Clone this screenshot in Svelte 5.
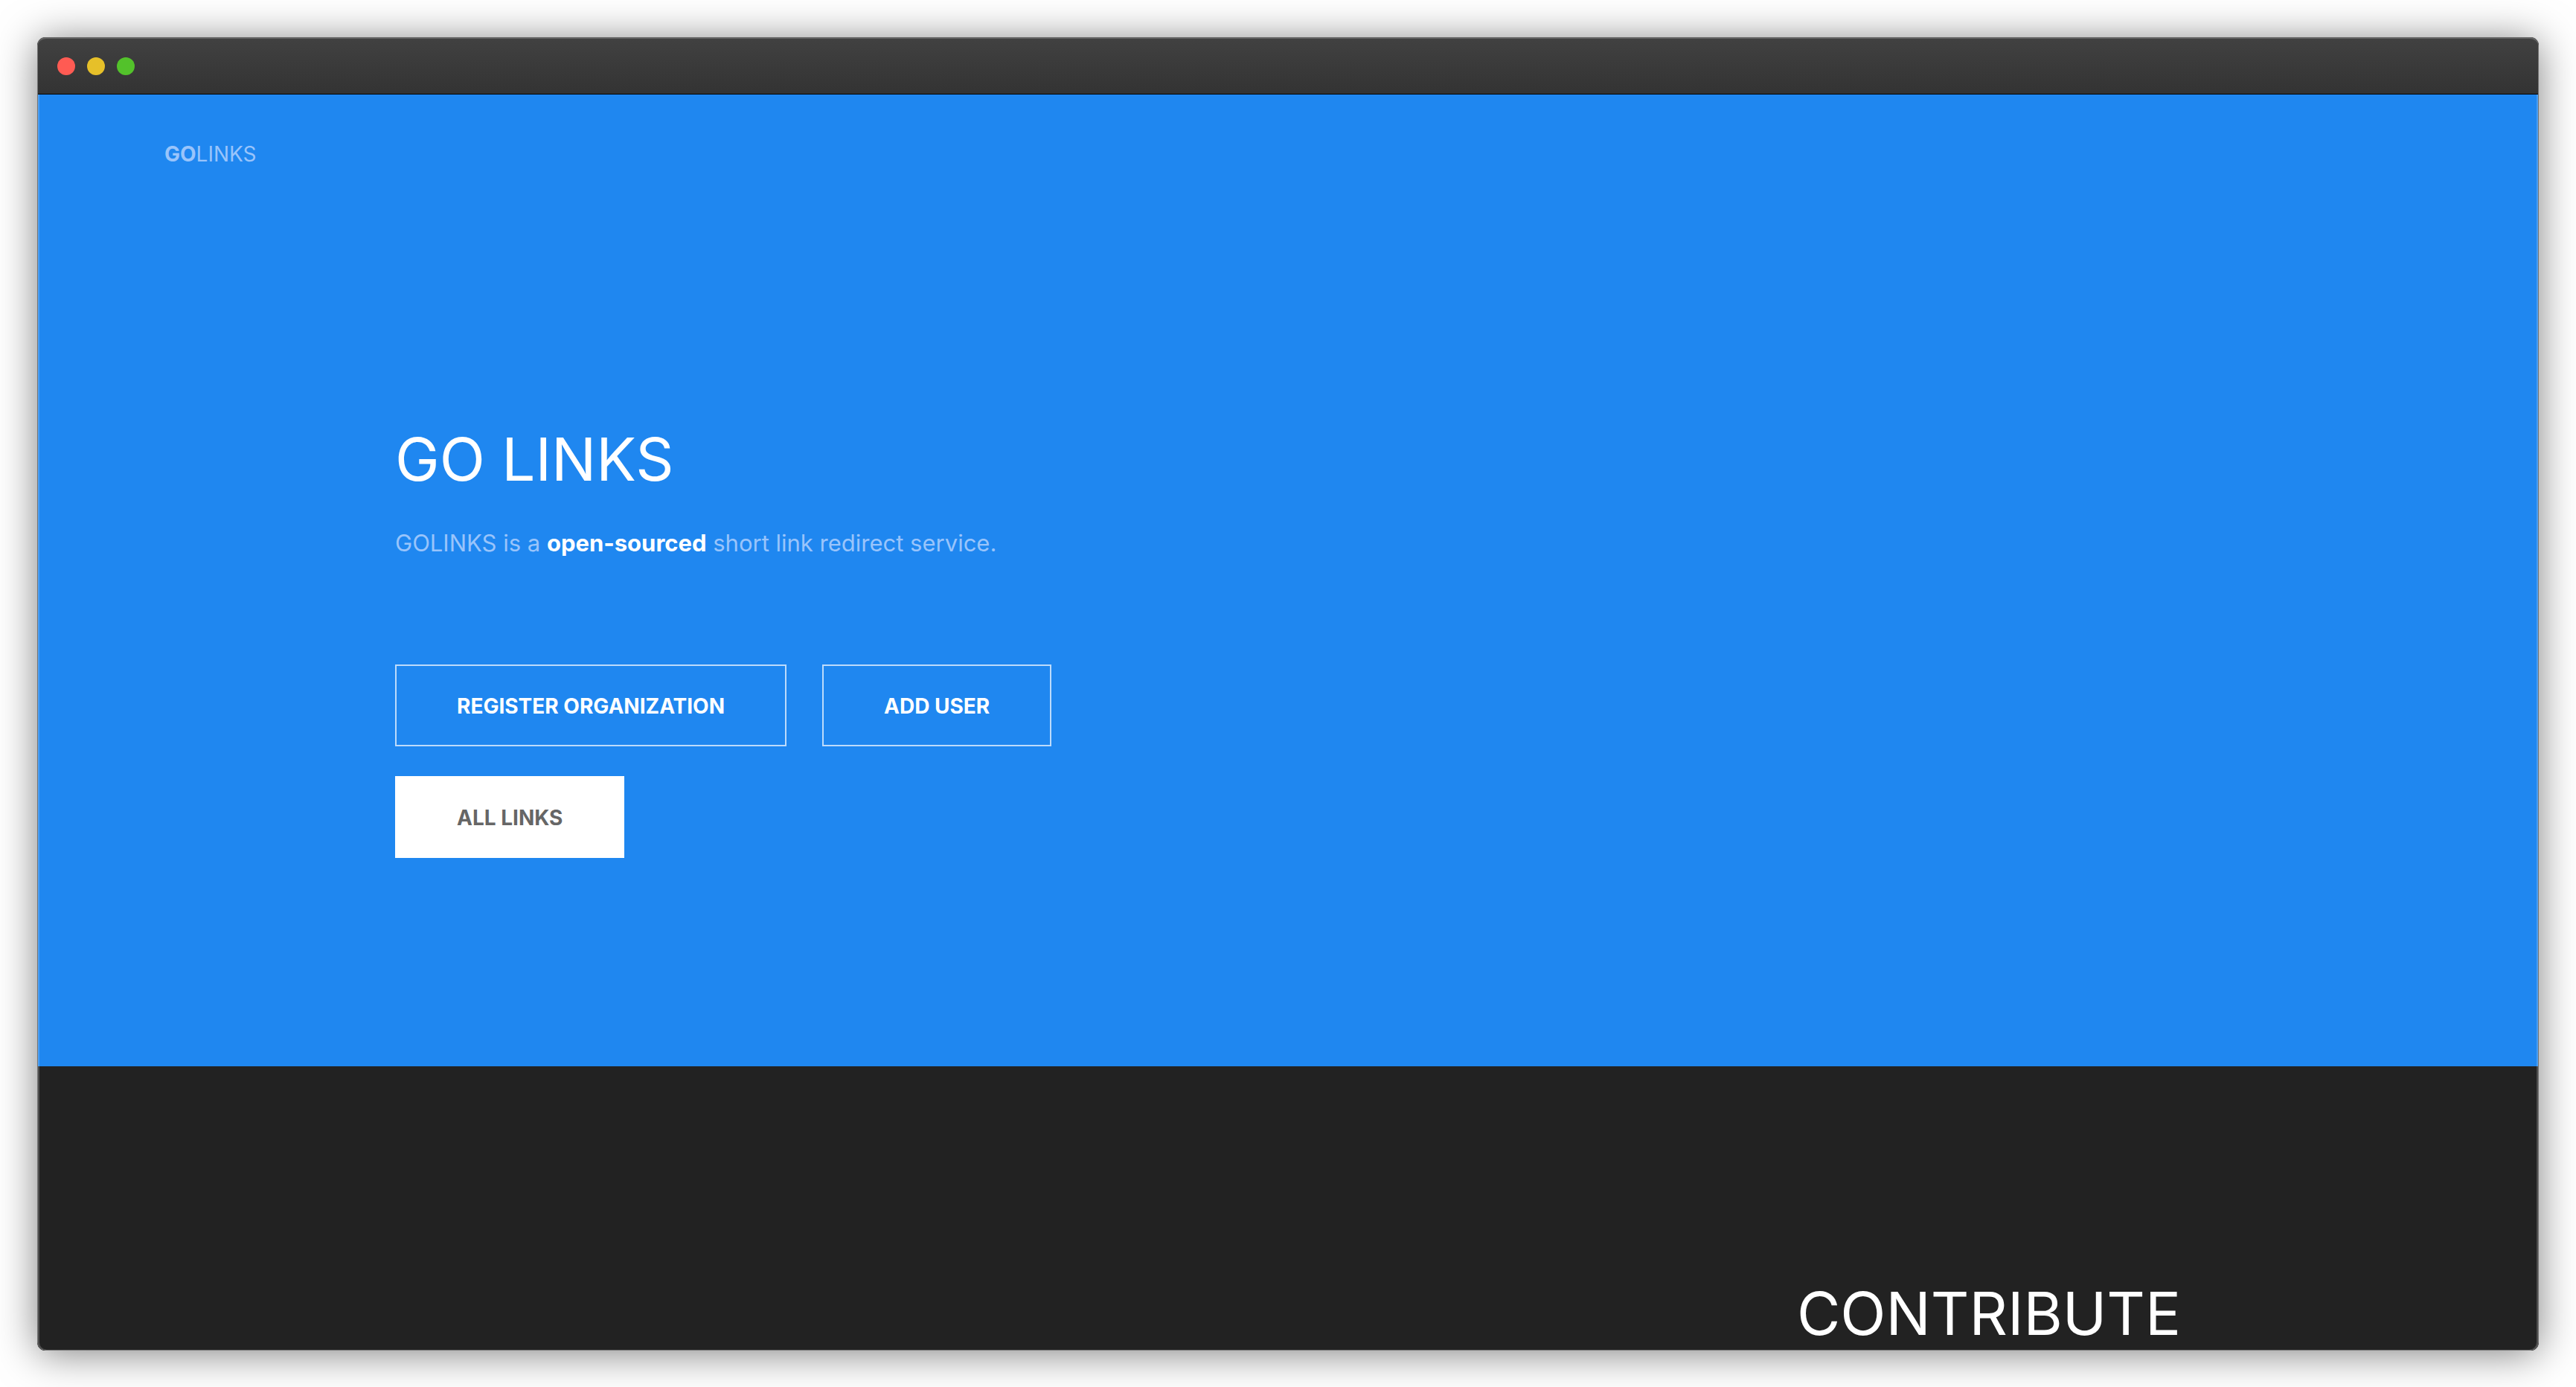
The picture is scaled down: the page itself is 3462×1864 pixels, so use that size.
<script>
  const actions = [
    { label: 'REGISTER ORGANIZATION', href: '#register', solid: false },
    { label: 'ADD USER', href: '#add-user', solid: false },
    { label: 'ALL LINKS', href: '#links', solid: true }
  ];
  const lights = ['close', 'minimize', 'zoom'];
</script>

<div class="stage">
  <div class="window">
    <div class="titlebar">
      {#each lights as light}
        <button class="light {light}" type="button" aria-label={light}></button>
      {/each}
    </div>

    <div class="page">
      <section class="hero">
        <nav>
          <a class="brand" href="#home"><strong>GO</strong>LINKS</a>
        </nav>
        <div class="container">
          <div class="intro">
            <h1>GO LINKS</h1>
            <p>GOLINKS is a <strong>open-sourced</strong> short link redirect service.</p>
            <div class="actions">
              {#each actions as action}
                <a class="action" class:solid={action.solid} href={action.href}>{action.label}</a>
              {/each}
            </div>
          </div>
        </div>
      </section>

      <section class="contribute">
        <div class="container">
          <h2>CONTRIBUTE</h2>
        </div>
      </section>
    </div>
  </div>
</div>

<style>
  :global(body) {
    margin: 0;
    background: #fff;
  }

  .stage {
    box-sizing: border-box;
    display: flex;
    min-height: 100vh;
    padding: 50px;
    overflow: hidden;
    font-family: Inter, 'Liberation Sans', sans-serif;
    color: #fff;
  }

  .window {
    position: relative;
    display: flex;
    flex: 1;
    flex-direction: column;
    min-width: 0;
    overflow: hidden;
    border-radius: 11px;
    background: #222;
    box-shadow: 0 4px 54px rgba(0, 0, 0, 0.5);
  }

  /* Hairline and inner light edge of the window */
  .window::after {
    content: '';
    position: absolute;
    inset: 0;
    border: 1px solid rgba(128, 128, 128, 0.9);
    border-radius: 11px;
    box-shadow:
      inset 2px 0 0 rgba(255, 255, 255, 0.2),
      inset -2px 0 0 rgba(255, 255, 255, 0.2);
    pointer-events: none;
  }

  .titlebar {
    position: relative;
    z-index: 1;
    box-sizing: border-box;
    display: flex;
    align-items: center;
    gap: 16px;
    height: 77px;
    margin: 0 1px;
    padding: 0 26px;
    border-top: 2px solid #666;
    border-bottom: 1px solid #000;
    border-radius: 11px 11px 0 0;
    background: linear-gradient(#414141, #333);
  }

  .light {
    width: 24px;
    height: 24px;
    padding: 0;
    border: 0;
    border-radius: 50%;
  }

  .close {
    background: #ff5b53;
  }

  .minimize {
    background: #e6c029;
  }

  .zoom {
    background: #53c22b;
  }

  .page {
    flex: 1;
    margin: 0 1px;
  }

  .hero {
    box-sizing: border-box;
    min-height: 1306px;
    background: #1f87f0;
  }

  nav {
    padding: 60px 170px 0;
  }

  .brand {
    font-size: 28px;
    line-height: 40px;
    color: #99c4fb;
    text-decoration: none;
  }

  .container {
    width: 2400px;
    max-width: 90%;
    margin: 0 auto;
  }

  .intro {
    width: 50%;
    padding-top: 340px;
  }

  h1,
  h2 {
    margin: 0;
    font-size: 80px;
    font-weight: 400;
    line-height: 100px;
  }

  p {
    margin: 38px 0 0;
    font-size: 31px;
    line-height: 50px;
    color: #99c4fb;
  }

  p strong {
    color: #fff;
  }

  .actions {
    display: flex;
    flex-wrap: wrap;
    gap: 40px 48px;
    margin-top: 138px;
  }

  .action {
    padding: 33px 81px 31px;
    border: 2px solid #bcdbfb;
    font-size: 28px;
    font-weight: 700;
    line-height: 42px;
    color: #fff;
    text-decoration: none;
  }

  .solid {
    border-color: #fff;
    background: #fff;
    color: #666;
  }

  .contribute {
    padding-top: 282px;
    background: #222;
    text-align: right;
  }
</style>
